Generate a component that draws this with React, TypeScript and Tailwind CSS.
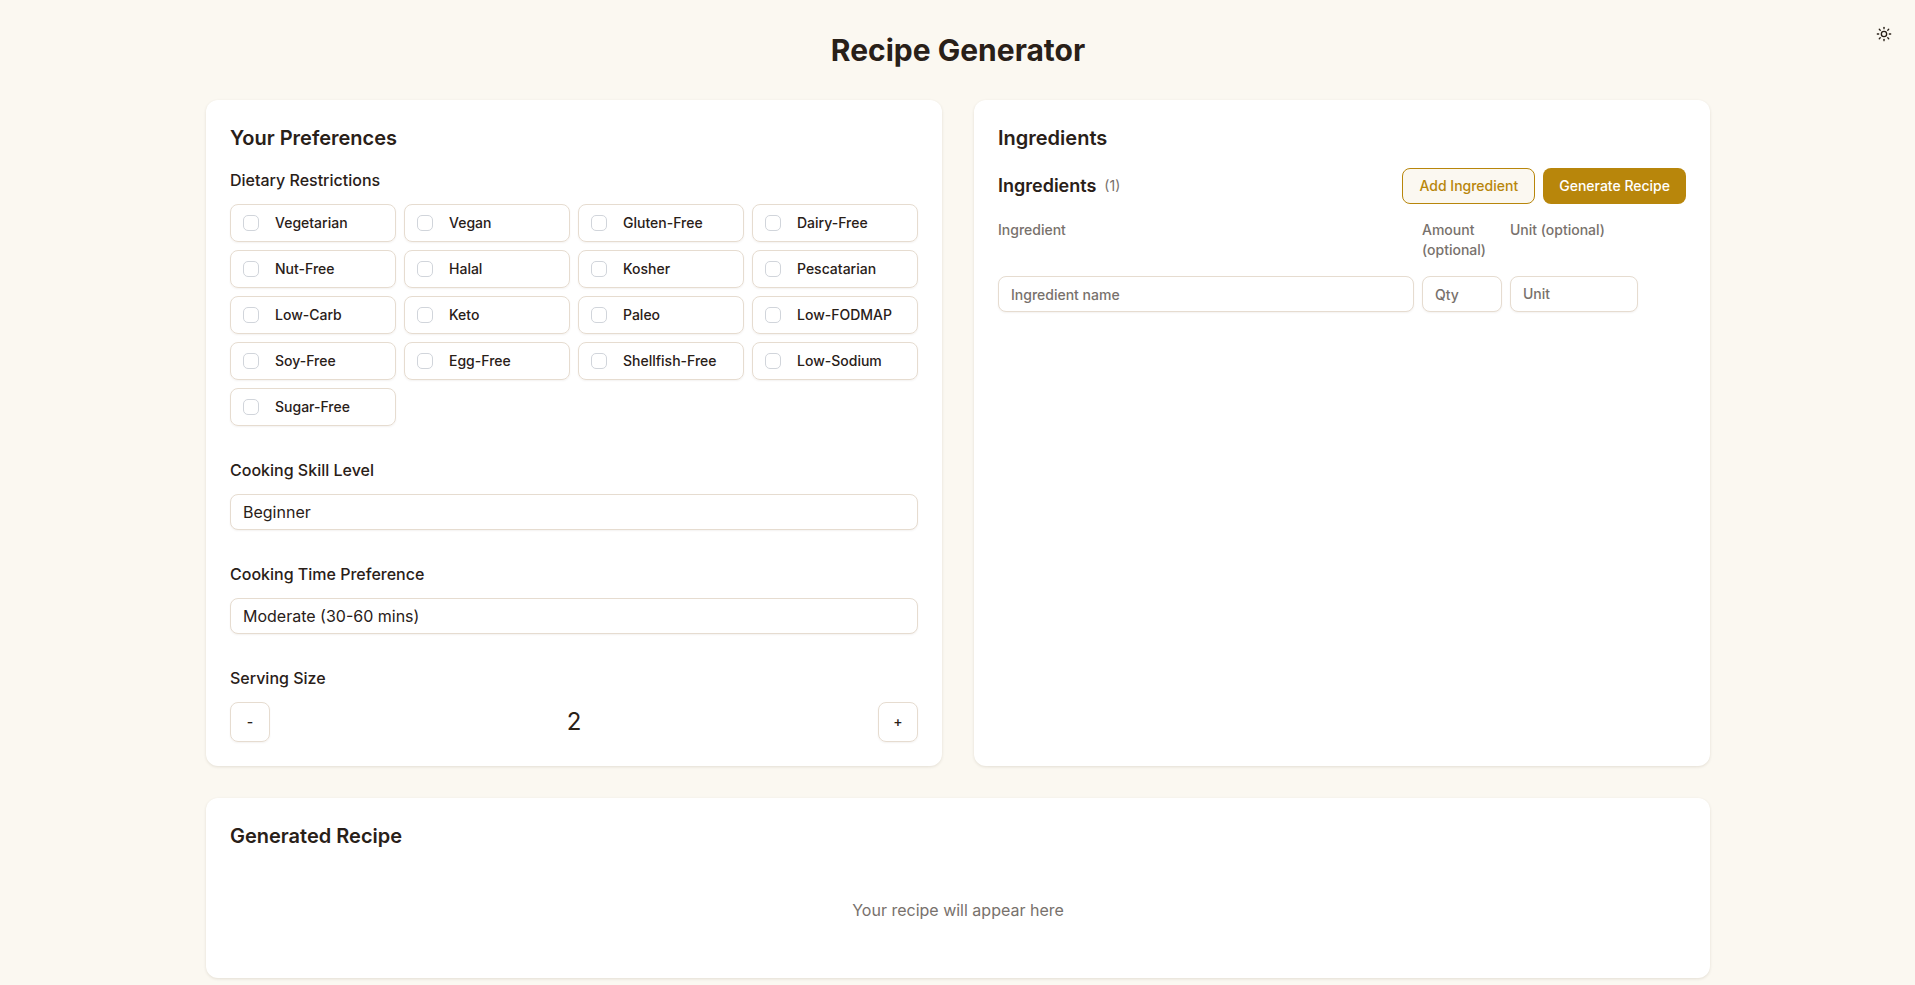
import React from 'react';
import { Sun } from 'lucide-react';

const DIETS = [
  'Vegetarian', 'Vegan', 'Gluten-Free', 'Dairy-Free',
  'Nut-Free', 'Halal', 'Kosher', 'Pescatarian',
  'Low-Carb', 'Keto', 'Paleo', 'Low-FODMAP',
  'Soy-Free', 'Egg-Free', 'Shellfish-Free', 'Low-Sodium',
  'Sugar-Free',
];

const Card: React.FC<{ className?: string; children: React.ReactNode }> = ({ className = '', children }) => (
  <div className={`bg-white rounded-xl shadow-[0_1px_3px_rgba(60,40,10,0.12)] p-6 ${className}`}>{children}</div>
);

const SelectBox: React.FC<{ label: string; value: string }> = ({ label, value }) => (
  <div className="mb-8">
    <label className="block text-base font-medium mb-3">{label}</label>
    <select
      defaultValue={value}
      className="block w-full h-9 px-3 bg-white appearance-none border border-[#e6dcd0] rounded-lg text-base leading-6 outline-none shadow-[0_1px_2px_rgba(60,40,10,0.06)]"
    >
      <option>{value}</option>
    </select>
  </div>
);

const inputClass =
  'block w-full h-9 px-3 bg-white border border-[#e6dcd0] rounded-lg text-sm outline-none placeholder:text-[#78716c] shadow-[0_1px_2px_rgba(60,40,10,0.06)]';

export default function App() {
  return (
    <div className="relative min-h-screen bg-[#fbf8f1] text-[#292018] font-['Inter',sans-serif] subpixel-antialiased">
      <button className="absolute top-[26px] right-[23px] p-0 text-[#292018]">
        <Sun size={16} />
      </button>

      <div className="max-w-[1536px] mx-auto pl-[16.5px] pr-[15.5px] pt-8 pb-[7px]">
        <h1 className="text-3xl font-bold text-center mb-8">Recipe Generator</h1>

        <div className="grid grid-cols-2 gap-8 mb-8">
          {/* Preferences */}
          <Card>
            <h2 className="text-xl font-semibold mb-4">Your Preferences</h2>

            <div className="mb-8">
              <label className="block text-base font-medium mb-3">Dietary Restrictions</label>
              <div className="grid grid-cols-4 gap-2">
                {DIETS.map((d) => (
                  <label
                    key={d}
                    className="flex items-center h-[38px] px-3 border border-[#e6dcd0] rounded-lg shadow-[0_1px_2px_rgba(60,40,10,0.06)] text-sm font-medium"
                  >
                    <span className="w-4 h-4 shrink-0 rounded-[5px] border border-[#d1d5db] mr-4" />
                    {d}
                  </label>
                ))}
              </div>
            </div>

            <SelectBox label="Cooking Skill Level" value="Beginner" />
            <SelectBox label="Cooking Time Preference" value="Moderate (30-60 mins)" />

            <label className="block text-base font-medium mb-3">Serving Size</label>
            <div className="flex items-center justify-between">
              <button className="w-10 h-10 border border-[#e6dcd0] rounded-lg text-sm font-medium shadow-[0_1px_2px_rgba(60,40,10,0.06)]">-</button>
              <span className="text-2xl">2</span>
              <button className="w-10 h-10 border border-[#e6dcd0] rounded-lg text-sm font-medium shadow-[0_1px_2px_rgba(60,40,10,0.06)]">+</button>
            </div>
          </Card>

          {/* Ingredients */}
          <Card>
            <h2 className="text-xl font-semibold mb-4">Ingredients</h2>
            <div className="flex items-center justify-between mb-4">
              <div className="flex items-center">
                <h3 className="text-lg font-semibold">Ingredients</h3>
                <span className="ml-2 text-sm text-[#78716c]">(1)</span>
              </div>
              <div className="flex gap-2">
                <button className="h-9 px-4 border border-[#b8860b] rounded-lg bg-[#fbf8f1] text-[#b8860b] text-sm font-medium">Add Ingredient</button>
                <button className="h-9 px-4 rounded-lg bg-[#b8860b] text-white text-sm font-medium">Generate Recipe</button>
              </div>
            </div>
            <div className="grid grid-cols-[1fr_80px_128px_40px] gap-x-2 gap-y-4 text-sm text-[#78716c] font-medium">
              <span>Ingredient</span>
              <span>Amount (optional)</span>
              <span>Unit (optional)</span>
              <span />
              <input className={inputClass} placeholder="Ingredient name" />
              <input className={inputClass} placeholder="Qty" />
              <input className={`${inputClass} pb-[2px]`} placeholder="Unit" />
            </div>
          </Card>
        </div>

        <Card>
          <h2 className="text-xl font-semibold mb-4">Generated Recipe</h2>
          <p className="py-8 text-center text-base text-[#78716c]">Your recipe will appear here</p>
        </Card>
      </div>
    </div>
  );
}
